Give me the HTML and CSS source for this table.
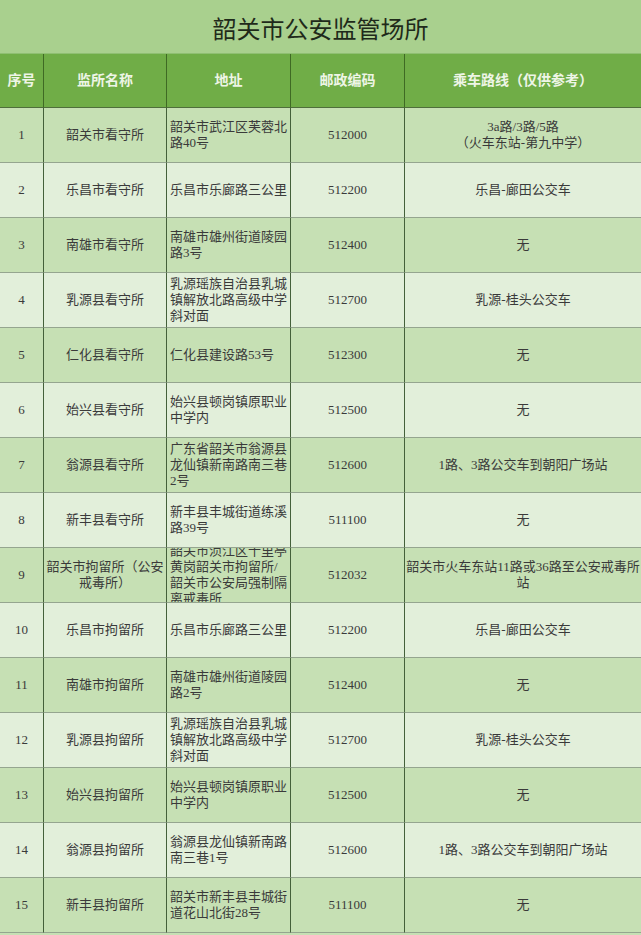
FILE: index.html
```html
<!DOCTYPE html>
<html lang="zh-CN">
<head>
<meta charset="utf-8">
<title>韶关市公安监管场所</title>
<link rel="stylesheet" href="styles.css">
</head>
<body>
<div class="sheet">
  <div class="title">韶关市公安监管场所</div>
  <div class="grid">
    <div class="cell hd">序号</div>
    <div class="cell hd">监所名称</div>
    <div class="cell hd">地址</div>
    <div class="cell hd">邮政编码</div>
    <div class="cell hd last">乘车路线（仅供参考）</div>

    <div class="cell odd">1</div>
    <div class="cell odd">韶关市看守所</div>
    <div class="cell odd addr">韶关市武江区芙蓉北<br>路40号</div>
    <div class="cell odd">512000</div>
    <div class="cell odd last">3a路/3路/5路<br>（火车东站-第九中学）</div>

    <div class="cell even">2</div>
    <div class="cell even">乐昌市看守所</div>
    <div class="cell even addr">乐昌市乐廊路三公里</div>
    <div class="cell even">512200</div>
    <div class="cell even last">乐昌-廊田公交车</div>

    <div class="cell odd">3</div>
    <div class="cell odd">南雄市看守所</div>
    <div class="cell odd addr">南雄市雄州街道陵园<br>路3号</div>
    <div class="cell odd">512400</div>
    <div class="cell odd last">无</div>

    <div class="cell even">4</div>
    <div class="cell even">乳源县看守所</div>
    <div class="cell even addr">乳源瑶族自治县乳城<br>镇解放北路高级中学<br>斜对面</div>
    <div class="cell even">512700</div>
    <div class="cell even last">乳源-桂头公交车</div>

    <div class="cell odd">5</div>
    <div class="cell odd">仁化县看守所</div>
    <div class="cell odd addr">仁化县建设路53号</div>
    <div class="cell odd">512300</div>
    <div class="cell odd last">无</div>

    <div class="cell even">6</div>
    <div class="cell even">始兴县看守所</div>
    <div class="cell even addr">始兴县顿岗镇原职业<br>中学内</div>
    <div class="cell even">512500</div>
    <div class="cell even last">无</div>

    <div class="cell odd">7</div>
    <div class="cell odd">翁源县看守所</div>
    <div class="cell odd addr">广东省韶关市翁源县<br>龙仙镇新南路南三巷<br>2号</div>
    <div class="cell odd">512600</div>
    <div class="cell odd last">1路、3路公交车到朝阳广场站</div>

    <div class="cell even">8</div>
    <div class="cell even">新丰县看守所</div>
    <div class="cell even addr">新丰县丰城街道练溪<br>路39号</div>
    <div class="cell even">511100</div>
    <div class="cell even last">无</div>

    <div class="cell odd">9</div>
    <div class="cell odd">韶关市拘留所（公安<br>戒毒所）</div>
    <div class="cell odd addr">韶关市浈江区十里亭<br>黄岗韶关市拘留所/<br>韶关市公安局强制隔<br>离戒毒所</div>
    <div class="cell odd">512032</div>
    <div class="cell odd last">韶关市火车东站11路或36路至公安戒毒所<br>站</div>

    <div class="cell even">10</div>
    <div class="cell even">乐昌市拘留所</div>
    <div class="cell even addr">乐昌市乐廊路三公里</div>
    <div class="cell even">512200</div>
    <div class="cell even last">乐昌-廊田公交车</div>

    <div class="cell odd">11</div>
    <div class="cell odd">南雄市拘留所</div>
    <div class="cell odd addr">南雄市雄州街道陵园<br>路2号</div>
    <div class="cell odd">512400</div>
    <div class="cell odd last">无</div>

    <div class="cell even">12</div>
    <div class="cell even">乳源县拘留所</div>
    <div class="cell even addr">乳源瑶族自治县乳城<br>镇解放北路高级中学<br>斜对面</div>
    <div class="cell even">512700</div>
    <div class="cell even last">乳源-桂头公交车</div>

    <div class="cell odd">13</div>
    <div class="cell odd">始兴县拘留所</div>
    <div class="cell odd addr">始兴县顿岗镇原职业<br>中学内</div>
    <div class="cell odd">512500</div>
    <div class="cell odd last">无</div>

    <div class="cell even">14</div>
    <div class="cell even">翁源县拘留所</div>
    <div class="cell even addr">翁源县龙仙镇新南路<br>南三巷1号</div>
    <div class="cell even">512600</div>
    <div class="cell even last">1路、3路公交车到朝阳广场站</div>

    <div class="cell odd">15</div>
    <div class="cell odd">新丰县拘留所</div>
    <div class="cell odd addr">韶关市新丰县丰城街<br>道花山北街28号</div>
    <div class="cell odd">511100</div>
    <div class="cell odd last">无</div>
  </div>
</div>
</body>
</html>
```

FILE: styles.css
```css
* { box-sizing: border-box; }
html, body { margin: 0; padding: 0; }
body {
  background: #c6e0b4;
  font-family: "Liberation Serif", "Noto Sans CJK SC", serif;
  color: #3a3a3a;
}
.sheet { width: 641px; }
.title {
  height: 54px;
  background: #a9d08e;
  border-bottom: 1px solid #8fbf72;
  display: flex;
  align-items: center;
  justify-content: center;
  font-family: "Noto Sans CJK SC", sans-serif;
  font-size: 24px;
  color: #1f2a1a;
  padding-top: 2px;
}
.grid {
  display: grid;
  grid-template-columns: 44px 123px 124px 114px 236px;
  grid-auto-rows: 55px;
}
.grid .hd:nth-child(-n+5) { height: 54px; }
.grid { grid-template-rows: 54px; }
.cell {
  border-right: 1px solid #44603a;
  border-bottom: 1px solid #95a58f;
  display: flex;
  flex-direction: column;
  justify-content: center;
  align-items: center;
  text-align: center;
  overflow: hidden;
  font-size: 13px;
  line-height: 16px;
  white-space: nowrap;
}
.cell.last { border-right: none; }
.hd {
  background: #70ad47;
  color: #eef5e6;
  font-weight: bold;
  font-size: 14px;
  border-right-color: #3f6a24;
  border-bottom-color: #4f6e3c;
}
.odd { background: #c6e0b4; }
.even { background: #e2efda; }
.addr {
  align-items: flex-start;
  text-align: left;
  padding-left: 3px;
}
```
